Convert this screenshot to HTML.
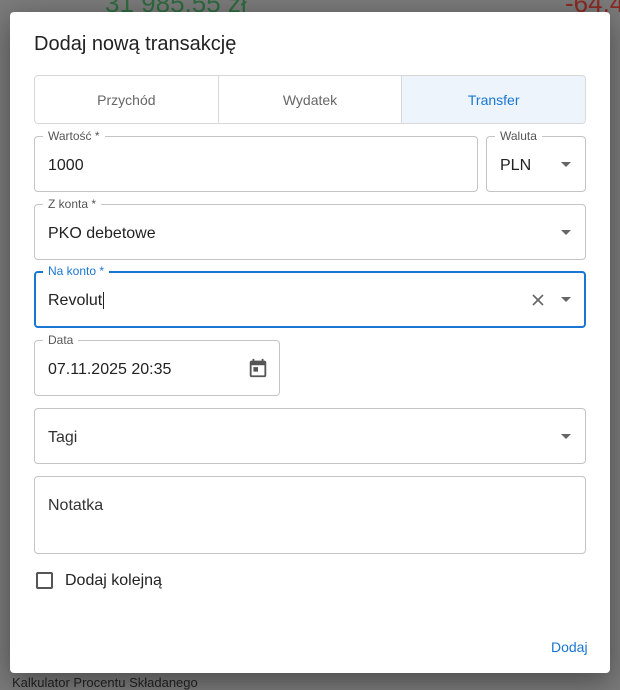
<!DOCTYPE html><html><head><meta charset="utf-8"><style>
*{box-sizing:border-box}body{margin:0;width:620px;height:682px;background:#7b7b7b;font-family:"Liberation Sans",sans-serif;position:relative;overflow:hidden}
.bgt{position:absolute;font-size:26px}
.dlg{position:absolute;left:10px;top:12px;width:600px;height:661px;background:#fff;border-radius:4px;box-shadow:0 8px 30px rgba(0,0,0,.4)}
.a{position:absolute}
h1{position:absolute;left:24px;top:21px;margin:0;font-size:20px;font-weight:normal;color:#222}
.tabs{position:absolute;left:24px;top:63px;width:552px;height:49px;border:1px solid #d8d8d8;border-radius:4px;display:flex;overflow:hidden}
.tabs div{flex:1;display:flex;align-items:center;justify-content:center;font-size:14px;color:#666;border-right:1px solid #d8d8d8}
.tabs div:last-child{border:none;background:#edf4fc;color:#1976d2}
.f{position:absolute;border:1px solid #c4c4c4;border-radius:4px}
.f .l{position:absolute;top:-8px;left:8px;background:#fff;padding:0 5px;font-size:12px;color:#555}
.f .v{position:absolute;left:13px;font-size:16px;color:#222}
.arr{position:absolute;right:14px;width:0;height:0;border-left:5px solid transparent;border-right:5px solid transparent;border-top:5px solid #666}
</style></head><body>
<div class="bgt" style="left:105px;top:-12px;color:#2e6b3e">31 985,55 zł</div>
<div class="bgt" style="left:565px;top:-12px;color:#8a2a22">-64,4</div>
<div class="a" style="left:12px;top:675px;font-size:13px;color:#222">Kalkulator Procentu Składanego</div>
<div class="dlg">
<h1>Dodaj nową transakcję</h1>
<div class="tabs"><div>Przychód</div><div>Wydatek</div><div>Transfer</div></div>
<div class="f" style="left:24px;top:124px;width:444px;height:56px"><span class="l">Wartość *</span><span class="v" style="top:20px">1000</span></div>
<div class="f" style="left:476px;top:124px;width:100px;height:56px"><span class="l">Waluta</span><span class="v" style="top:20px">PLN</span><span class="arr" style="top:25px"></span></div>
<div class="f" style="left:24px;top:192px;width:552px;height:56px"><span class="l">Z konta *</span><span class="v" style="top:20px">PKO debetowe</span><span class="arr" style="top:25px"></span></div>
<div class="f" style="left:24px;top:259px;width:552px;height:57px;border:2px solid #1976d2"><span class="l" style="color:#1976d2;top:-9px;left:7px">Na konto *</span><span class="v" style="top:19px;left:12px">Revolut<span style="border-left:1px solid #222;margin-left:1px"></span></span>
<svg class="a" style="right:38px;top:19px" width="16" height="16" viewBox="0 0 16 16"><path d="M3 3L13 13M13 3L3 13" stroke="#666" stroke-width="1.6"/></svg><span class="arr" style="top:24px;right:13px"></span></div>
<div class="f" style="left:24px;top:328px;width:246px;height:56px"><span class="l">Data</span><span class="v" style="top:20px">07.11.2025 20:35</span>
<svg class="a" style="left:212px;top:16px" width="22" height="22" viewBox="0 0 24 24"><path fill="#555" d="M19 4h-1V2h-2v2H8V2H6v2H5c-1.1 0-2 .9-2 2v14c0 1.1.9 2 2 2h14c1.1 0 2-.9 2-2V6c0-1.1-.9-2-2-2zm0 16H5V9h14v11zM7 11h5v5H7z"/></svg></div>
<div class="f" style="left:24px;top:396px;width:552px;height:56px"><span class="v" style="top:20px;color:#333">Tagi</span><span class="arr" style="top:25px"></span></div>
<div class="f" style="left:24px;top:464px;width:552px;height:78px"><span class="v" style="top:20px;color:#333">Notatka</span></div>
<div class="a" style="left:26px;top:560px;width:17px;height:17px;border:2px solid #555;border-radius:2px"></div>
<div class="a" style="left:55px;top:560px;font-size:16px;color:#222">Dodaj kolejną</div>
<div class="a" style="left:541px;top:627px;font-size:14px;color:#1976d2">Dodaj</div>
</div>
</body></html>
